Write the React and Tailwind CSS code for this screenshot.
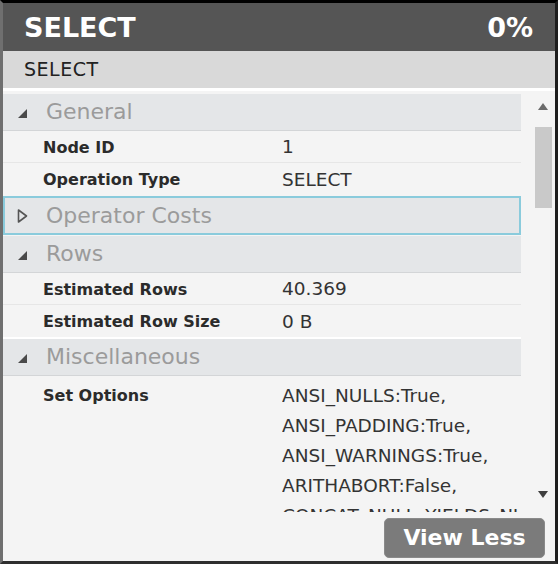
import React from "react";

const font = { fontFamily: '"DejaVu Sans", Verdana, sans-serif' };

function DownTri() {
  return (
    <svg width="11" height="11" viewBox="0 0 11 11" className="shrink-0">
      <polygon points="10,1 10,10 1,10" fill="#4a4a4a" />
    </svg>
  );
}

function RightTri() {
  return (
    <svg width="11" height="16" viewBox="0 0 11 16" className="shrink-0">
      <polygon points="1.5,2 9.5,8 1.5,14" fill="none" stroke="#555" strokeWidth="1.6" strokeLinejoin="round" />
    </svg>
  );
}

function SectionHeader({ title }) {
  return (
    <div className="h-[37px] flex items-center bg-[#e4e6e8] border-b border-[#d3d5d7]">
      <div className="w-[43px] pl-[14px] flex items-center pt-[2px]">
        <DownTri />
      </div>
      <span className="text-[22px] text-[#9b9b9b] leading-none">{title}</span>
    </div>
  );
}

function Row({ label, value, last }) {
  return (
    <div className={"h-[32px] flex items-center pl-[40px] pt-[2px] " + (last ? "" : "border-b border-[#e6e6e6]")}>
      <div className="w-[239px] text-[16px] font-bold text-[#2b2b2b] leading-none">{label}</div>
      <div className="flex-1 text-[18.5px] text-[#333] leading-none">{value}</div>
    </div>
  );
}

export default function App() {
  const opts = [
    "ANSI_NULLS:True,",
    "ANSI_PADDING:True,",
    "ANSI_WARNINGS:True,",
    "ARITHABORT:False,",
    "CONCAT_NULL_YIELDS_NULL:True,",
  ];
  return (
    <div style={font} className="w-[558px] h-[564px] flex flex-col border-t-[3px] border-t-black border-l-[3px] border-l-[#6f6f6f] border-r-[3px] border-r-[#1e1e1e] border-b-[3px] border-b-[#2e2e2e] bg-[#f4f4f4] overflow-hidden">
      <div className="h-[48px] shrink-0 bg-[#555555] flex items-center justify-between pl-[21px] pr-[22px]">
        <span className="text-white font-bold text-[27px] leading-none">SELECT</span>
        <span className="text-white font-bold text-[27px] leading-none">0%</span>
      </div>
      <div className="h-[37px] shrink-0 bg-[#d9d9d9] flex items-center pl-[21px]">
        <span className="text-[19px] text-[#222] leading-none tracking-[0.5px]">SELECT</span>
      </div>
      <div className="h-[3px] shrink-0 bg-white" />
      <div className="h-[421px] shrink-0 flex">
        <div className="flex-1 overflow-hidden pt-[3px]">
          <SectionHeader title="General" />
          <Row label="Node ID" value="1" />
          <Row label="Operation Type" value="SELECT" last />
          <div className="mt-[1px] h-[39px] flex items-center bg-[#e4e6e8] border-2 border-[#8acbdc]">
            <div className="w-[41px] pl-[12px] flex items-center">
              <RightTri />
            </div>
            <span className="text-[22px] text-[#9b9b9b] leading-none">Operator Costs</span>
          </div>
          <div className="mt-[1px]">
            <SectionHeader title="Rows" />
          </div>
          <Row label="Estimated Rows" value="40.369" />
          <Row label="Estimated Row Size" value="0 B" last />
          <div className="h-[2px] bg-white" />
          <SectionHeader title="Miscellaneous" />
          <div className="flex pl-[40px] pt-[5px]">
            <div className="w-[239px] shrink-0 text-[16px] font-bold text-[#2b2b2b] leading-[30px]">Set Options</div>
            <div className="flex-1 min-w-0 overflow-hidden text-[18.5px] text-[#333] leading-[30px] pr-[4px]">
              {opts.map((o) => (
                <div key={o} className="whitespace-nowrap">{o}</div>
              ))}
            </div>
          </div>
        </div>
        <div className="w-[34px] shrink-0 flex flex-col items-center pl-[10px] pt-[12px] pb-[14px]">
          <svg width="10" height="7" viewBox="0 0 10 7">
            <polygon points="5,0 10,7 0,7" fill="#6b6b6b" />
          </svg>
          <div className="mt-[17px] w-[17px] h-[81px] bg-[#c9c9c9]" />
          <div className="flex-1" />
          <svg width="10" height="7" viewBox="0 0 10 7">
            <polygon points="0,0 10,0 5,7" fill="#3f3f3f" />
          </svg>
        </div>
      </div>
      <div className="flex-1 flex justify-end items-start pt-[6px] pr-[10px]">
        <div className="h-[40px] w-[161px] rounded-[5px] bg-[#7b7b7b] border border-[#8a8a8a] flex items-center justify-center">
          <span className="text-white font-bold text-[22px] leading-none">View Less</span>
        </div>
      </div>
    </div>
  );
}
